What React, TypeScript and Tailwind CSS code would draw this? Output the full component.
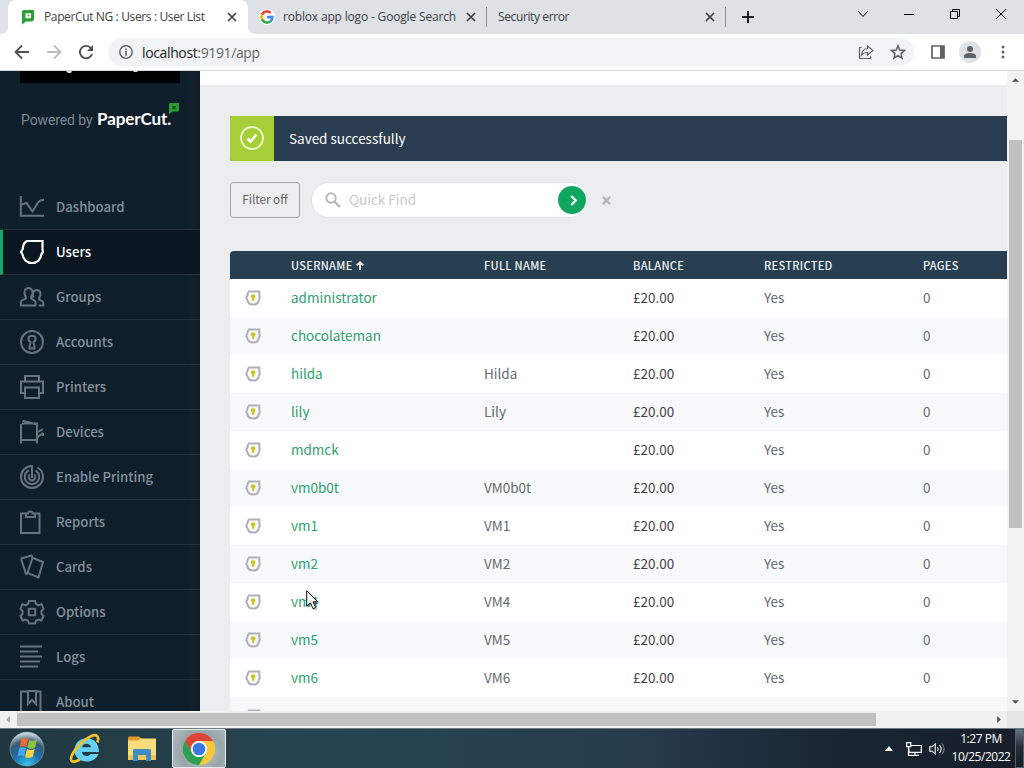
import React from "react";

const Svg = ({ className, children, vb = "0 0 24 24" }: { className?: string; children: React.ReactNode; vb?: string }) => (
  <svg viewBox={vb} className={className} fill="none" stroke="currentColor">
    {children}
  </svg>
);

const navIcons: Record<string, React.ReactNode> = {
  Dashboard: <path d="M.8 1v19.800H24M.8 9.800 6.500 8l6 8.500L18 7.500c1.200-1.800 3-2.500 6-2.700" />,
  Users: <path strokeWidth="2.200" d="M7 1h15.500v8.500L23 12l-1.600 2.200C20.800 19.500 17 23 12 23S3.200 19.500 2.400 14.200L1 12l1.800-3C3 5 4.500 2.200 7 1Z" />,
  Groups: (
    <path d="M.8 20.500v-3.800c0-1.500 3.500-1.700 5-3.200v-2C4 10 3.500 3 8.500 3s4.500 7 2.700 8.500v2c2 1.500 4.300 2 4.300 3.500v3.500ZM13.500 12.500c-1.500-3-.5-7.500 3.300-7.500 4.500 0 4.200 5.500 2.500 7.500v2.200c2 1 4 1.300 4 2.800v3h-4.500" />
  ),
  Accounts: (
    <>
      <circle cx="12" cy="12" r="11" />
      <path d="M9.500 18.500v-2l1-4.500C7 10 8 5.800 12 5.800s5 4.200 1.500 6.200l1 4.500v2Z" />
    </>
  ),
  Printers: <path d="M5 6V1h14v5M4 18H1V6.500h22V18h-3M5 12.500h14V23H5Z" />,
  Devices: <path d="M2 3.500h15v16.500M1 4v19.500M1 20h16v3.500M2.500.8 17 4.500M18 12l5-3M17 17.500l6-4.500M23 13v3" />,
  "Enable Printing": (
    <path d="M12 13V1C5.500 1 1 6 1 12s5 11 11 11 11-5 11-11c0-4-2-7.500-5.500-9.500M9 5.500C6 6.500 4.800 9 4.800 12c0 4 3.200 7.200 7.200 7.200s7.200-3.200 7.200-7.200c0-2.700-1.300-5-3.700-6.300M9.500 9.500c-2 2.500-.5 6 2.500 6s4.500-3.500 2.500-6" />
  ),
  Reports: <path d="M5.500 3.500H1V23h18.500V3.500h-5M6 7h9V3.500h-2.500C12.500.8 8 .8 8 3.500H6Z" />,
  Cards: <path d="m1 3.500 10.500-3 1 2.300M1 3.500l5 15.500 3-1M12.500 2.800 23 7l-4.500 15.500L7.500 18Z" />,
  Options: (
    <>
      <path d="M9 1h6l1 3 2.500 1.300L21.500 4l2 5-2 2v3l2 2-2 4.500-3-1-2.500 1.300-1 2.700H9l-1-2.700L5.500 19.500l-3 1L.5 16l2-2v-3l-2-2 2-5 3 1.300L8 4Z" />
      <path d="M8.800 8.800h6.400v6.400H8.800Z" />
    </>
  ),
  Logs: <path d="M0 1.500h22M0 6.500h18M0 11.500h22M0 16.500h20M0 21.500h18" />,
  About: <path d="M7.500 1.500H1V24M16 1.500h4.500V24M8 1h8v13l-4-4-4 4Z" />,
};

const nav = Object.keys(navIcons);

const users: [string, string][] = [
  ["administrator", ""],
  ["chocolateman", ""],
  ["hilda", "Hilda"],
  ["lily", "Lily"],
  ["mdmck", ""],
  ["vm0b0t", "VM0b0t"],
  ["vm1", "VM1"],
  ["vm2", "VM2"],
  ["vm4", "VM4"],
  ["vm5", "VM5"],
  ["vm6", "VM6"],
];

const Close = ({ className = "" }: { className?: string }) => (
  <Svg vb="0 0 10 10" className={"h-[10px] w-[10px] text-[#3c4043] " + className}>
    <path strokeWidth="1.700" d="m1 1 8 8M9 1 1 9" />
  </Svg>
);

const UserBadge = () => (
  <Svg vb="0 0 16 16" className="mt-[2px] ml-[15px] h-4 w-4 shrink-0 text-[#b0b1b8]">
    <path strokeWidth="2" d="M4 1.500h10.300v5l.6 1.500-.9 1.500c-.5 3.100-2.800 5.100-5.900 5.100S2.700 12.600 2.200 9.500L1.100 7.800l1.100-1.600c.2-2.500.8-3.800 1.800-4.700Z" />
    <path fill="#cfc225" stroke="none" d="M8.200 4.300c2.800 0 3 2.900 1.200 4v2l-1.200 1.200L7 10.300v-2c-1.800-1.100-1.600-4 1.200-4Z" />
  </Svg>
);

const cols = "grid grid-cols-[61px_193px_149px_131px_159px_84px] items-center";

function TabStrip() {
  return (
    <div className="flex h-[34px] shrink-0 bg-[#dee1e6] text-[12px] text-[#3c4043]">
      <div className="relative ml-2 flex w-[240px] items-center rounded-t-lg bg-white">
        <span className="absolute bottom-0 -left-2 h-2 w-2 bg-[radial-gradient(circle_at_0_0,#dee1e6_8px,white_8px)]" />
        <span className="absolute -right-2 bottom-0 h-2 w-2 bg-[radial-gradient(circle_at_100%_0,#dee1e6_8px,white_8px)]" />
        <svg viewBox="0 0 14 16" className="ml-[13px] h-4 w-[14px]">
          <path fill="#2f9e36" d="M3 1h10v8.500c0 2-1 3-3 3H5l-4 3V4c0-2 0-3 2-3Z" />
          <path fill="#fff" d="M4.500 4.300h5.500v5H4.500Z" />
          <path fill="#2f9e36" d="M6.500 5.800h1.600v1.600H6.500z" />
        </svg>
        <span className="ml-[9px] w-[183px] whitespace-nowrap tracking-[-0.370px]">PaperCut NG : Users : User List</span>
        <Close />
      </div>
      <div className="flex w-[239px] items-center">
        <svg viewBox="0 0 48 48" className="ml-[11px] h-4 w-4 rounded-full bg-white p-px">
          <path fill="#EA4335" d="M24 9.500c3.500 0 6.700 1.200 9.200 3.600l6.900-6.900C35.900 2.400 30.500 0 24 0 14.600 0 6.500 5.400 2.600 13.200l8 6.200C12.400 13.700 17.700 9.500 24 9.500z" />
          <path fill="#4285F4" d="M47 24.600c0-1.600-.2-3.100-.4-4.600H24v9h12.900c-.6 3-2.200 5.500-4.700 7.200l7.700 6c4.500-4.200 7.100-10.400 7.100-17.600z" />
          <path fill="#FBBC05" d="M10.500 28.600A14 14 0 0 1 10.500 19.400l-8-6.200a24 24 0 0 0 0 21.600z" />
          <path fill="#34A853" d="M24 48c6.500 0 11.900-2.100 15.900-5.800l-7.700-6c-2.200 1.500-4.900 2.300-8.200 2.300-6.300 0-11.600-4.200-13.500-9.900l-8 6.200C6.500 42.600 14.600 48 24 48z" />
        </svg>
        <span className="ml-[8px] w-[183px] whitespace-nowrap tracking-[-0.170px]">roblox app logo - Google Search</span>
        <Close />
        <span className="ml-[10px] h-5 w-px bg-[#8b8f94]" />
      </div>
      <div className="flex w-[239px] items-center">
        <span className="ml-[11px] w-[207px] whitespace-nowrap tracking-[-0.380px]">Security error</span>
        <Close />
        <span className="ml-[10px] h-5 w-px bg-[#8b8f94]" />
      </div>
      <Svg vb="0 0 12 12" className="mt-[11px] ml-[16px] h-3 w-3 text-[#202124]">
        <path strokeWidth="2" d="M6 0v12M0 6h12" />
      </Svg>
      <Svg vb="0 0 12 12" className="mt-[8px] ml-[103px] h-3 w-3 text-black">
        <path d="m1 3 5 5.500L11 3" />
      </Svg>
      <Svg vb="0 0 12 12" className="mt-[8px] ml-[34px] h-3 w-3 text-black">
        <path d="M1 6.500h10" />
      </Svg>
      <Svg vb="0 0 12 12" className="mt-[8px] ml-[34px] h-3 w-3 text-black">
        <path d="M1.500 3.500h7v7h-7ZM3.500 3.500v-2h7v7h-2" />
      </Svg>
      <Svg vb="0 0 12 12" className="mt-[8px] ml-[34px] h-3 w-3 text-black">
        <path d="m1 1 10 10M11 1 1 11" />
      </Svg>
    </div>
  );
}

function Toolbar() {
  return (
    <div className="flex h-[37px] shrink-0 items-center border-b border-[#d6d7da] bg-white text-[#5f6368]">
      <Svg vb="0 0 16 16" className="ml-[14px] h-4 w-4 text-[#4d5156]">
        <path strokeWidth="1.800" d="M15 8H2M8 1.500 1.500 8 8 14.500" />
      </Svg>
      <Svg vb="0 0 16 16" className="ml-[16px] h-4 w-4 text-[#babcbe]">
        <path strokeWidth="1.800" d="M1 8h13M8 1.500 14.500 8 8 14.500" />
      </Svg>
      <Svg vb="0 0 16 16" className="ml-[16px] h-4 w-4 text-[#4d5156]">
        <path strokeWidth="1.900" d="M14 10a6.200 6.200 0 1 1-1.600-6.400L14.500 5.700" />
        <path fill="currentColor" stroke="none" d="M15 1v6H9Z" />
      </Svg>
      <div className="ml-[14px] flex h-7 w-[806px] items-center rounded-full bg-[#f1f3f4]">
        <Svg vb="0 0 14 14" className="ml-[11px] h-[14px] w-[14px]">
          <circle cx="7" cy="7" r="6.200" strokeWidth="1.400" />
          <path strokeWidth="1.500" d="M7 3.200v1.600M7 6v4.800" />
        </Svg>
        <span className="ml-[9px] flex-1 text-[14px] tracking-[-0.370px]">
          <span className="text-[#202124]">localhost</span>:9191/app
        </span>
        <Svg vb="0 0 16 16" className="h-4 w-4">
          <path strokeWidth="1.200" d="M3.500 3.500H1.500v11h11V12M9.500 2l5.500 4.500L9.500 11V8.500c-3 0-4.500.5-6 2.500.5-4 2-6 6-6.500Z" />
        </Svg>
        <Svg vb="0 0 16 16" className="mr-[8px] ml-[16px] h-4 w-4">
          <path strokeWidth="1.500" d="m8 1.800 1.800 4.300 4.700.4L11 9.600l1 4.600-4-2.500-4 2.500 1-4.600-3.500-3.100 4.700-.4Z" />
        </Svg>
      </div>
      <Svg vb="0 0 14 14" className="ml-[17px] h-[14px] w-[14px]">
        <path strokeWidth="1.700" d="M1 1h12v12H1Z" />
        <path fill="currentColor" stroke="none" d="M9 1h4v12H9Z" />
      </Svg>
      <span className="ml-[14px] flex h-[22px] w-[22px] items-center justify-center rounded-full bg-[#dee1e6]">
        <svg viewBox="0 0 12 12" className="h-3 w-3" fill="#5f6368">
          <circle cx="6" cy="3" r="3" />
          <path d="M0 12V10c0-2 3-3 6-3s6 1 6 3v2Z" />
        </svg>
      </span>
      <svg viewBox="0 0 4 14" className="ml-[20px] h-[14px] w-1" fill="#5f6368">
        <circle cx="2" cy="2" r="1.500" />
        <circle cx="2" cy="7" r="1.500" />
        <circle cx="2" cy="12" r="1.500" />
      </svg>
    </div>
  );
}

function Sidebar() {
  return (
    <aside className="flex w-[200px] shrink-0 flex-col overflow-hidden bg-[linear-gradient(90deg,#0f1e2b_0%,#0f1e2b_94%,#12202a_96%,#101b24_100%)]">
      <div className="mx-5 h-3 shrink-0 bg-black">
        <svg viewBox="0 0 160 12" className="h-3 w-40" fill="#ddd">
          <path d="M46 0h6l-1 2h-3ZM113 0h5l-1 1h-3Z" />
        </svg>
      </div>
      <div className="mt-[22px] flex h-[30px] shrink-0 items-center pl-[21px] whitespace-nowrap">
        <span className="w-[76px] font-['Roboto',sans-serif] text-[14px] tracking-[-0.100px] text-[#7d8790]">Powered by</span>
        <span className="w-[72px] pb-[2px] font-['Lato',sans-serif] text-[17px] font-bold tracking-[-0.100px] text-white">PaperCut.</span>
        <svg viewBox="0 0 10 11" className="mb-[23px] h-[11px] w-[10px]">
          <path fill="#2b9a35" d="M1.500 0H10v7c0 1-1 1.500-2 1.500H4L0 11V2C0 .5.500 0 1.500 0Z" />
          <path fill="#12501e" d="M3.500 3h3v3h-3z" />
        </svg>
      </div>
      <nav className="mt-[50px] font-['Noto_Sans_CJK_SC',sans-serif]">
        {nav.map((n) => {
          const active = n === "Users";
          return (
            <div
              key={n}
              className={
                "flex h-[45px] items-center border-b border-[#25343f] text-[13.200px] font-medium " +
                (active ? "border-l-[3px] border-l-[#14a868] bg-[#0b1620] pl-[17px] text-white" : "pl-5 text-[#84919b]")
              }
            >
              <Svg className={"mr-3 h-6 w-6 shrink-0 overflow-visible stroke-2 " + (active ? "text-white" : "text-[#66747e]")}>
                {navIcons[n]}
              </Svg>
              <span className="leading-5 whitespace-nowrap">{n}</span>
            </div>
          );
        })}
      </nav>
    </aside>
  );
}

function Main() {
  return (
    <main className="flex w-[807px] shrink-0 flex-col overflow-hidden bg-[#ecedef] font-['Noto_Sans_CJK_SC',sans-serif]">
      <div className="h-[14px] shrink-0 bg-white" />
      <div className="mt-[31px] ml-[30px] flex h-[45px] shrink-0 items-center overflow-hidden rounded-l-[2px] bg-[#2a3d50] text-[13.500px] text-white">
        <div className="flex h-full w-11 items-center justify-center bg-[#a6ce39]">
          <Svg className="mb-px h-6 w-6 text-[#eef8cc]">
            <circle cx="12" cy="12" r="11" strokeWidth="1.800" />
            <path strokeWidth="2.600" stroke="#fff" d="m7.500 12.500 3 3 6-7" />
          </Svg>
        </div>
        <span className="ml-[15px] pb-[2px] leading-5">Saved successfully</span>
      </div>
      <div className="mt-[21px] ml-[30px] flex h-9 shrink-0 items-center">
        <button className="h-9 w-[70px] rounded-[3px] border border-[#a2a4a8] pb-[2px] text-[11.700px] leading-4 whitespace-nowrap text-[#606368]">Filter off</button>
        <div className="ml-[11px] flex h-9 w-[277px] items-center rounded-full border border-[#e2e3e5] bg-white">
          <Svg vb="0 0 16 16" className="ml-[13px] h-4 w-4 text-[#b4b5b6]">
            <circle cx="6" cy="6" r="4.700" strokeWidth="1.900" />
            <path strokeWidth="2.200" d="m9.500 9.500 5.500 5.500" />
          </Svg>
          <span className="ml-[8px] w-[209px] pb-[2px] text-[13.500px] leading-5 text-[#c7c8ca]">Quick Find</span>
          <span className="flex h-7 w-7 items-center justify-center rounded-full bg-[#0fa75d]">
            <Svg vb="0 0 8 12" className="mt-px ml-[3px] h-[11px] w-[8px] text-white">
              <path strokeWidth="2.400" d="m1 1 5 5-5 5" />
            </Svg>
          </span>
        </div>
        <Svg vb="0 0 10 10" className="mt-px ml-[14px] h-[9px] w-[9px] text-[#b6b7b9]">
          <path strokeWidth="2.500" d="m1 1 8 8M9 1 1 9" />
        </Svg>
      </div>
      <div className="mt-[33px] ml-[30px] shrink-0 text-[13.500px]">
        <div className={cols + " h-7 rounded-tl-[4px] bg-[#283f52] pb-px text-[11px] font-medium tracking-[0.310px] whitespace-nowrap text-[#f2f5f7]"}>
          <span />
          <span className="flex items-center leading-4">
            USERNAME
            <Svg vb="0 0 8 9" className="mt-px ml-[3px] h-[9px] w-2">
              <path strokeWidth="1.800" d="M4 9V1.500M.7 4.500 4 1.200l3.300 3.300" />
            </Svg>
          </span>
          <span className="leading-4">FULL NAME</span>
          <span className="leading-4">BALANCE</span>
          <span className="leading-4">RESTRICTED</span>
          <span className="leading-4">PAGES</span>
        </div>
        {users.map(([u, f], i) => (
          <div key={u} className={cols + " h-[38px] pb-[2px] leading-5 text-[#66696d] " + (i % 2 ? "bg-[#f7f9fa]" : "bg-white")}>
            <UserBadge />
            <span className="text-[#2f9f6d]">{u}</span>
            <span>{f}</span>
            <span className="text-[#414347]">£20.00</span>
            <span>Yes</span>
            <span>0</span>
          </div>
        ))}
        <div className={cols + " h-[38px] bg-[#f7f8f8]"}>
          <UserBadge />
        </div>
      </div>
    </main>
  );
}

function Taskbar() {
  return (
    <footer className="flex h-10 shrink-0 items-center overflow-hidden border-t border-[#6d7d85] bg-[linear-gradient(90deg,#20373f_0%,#274551_30%,#263c4d_62%,#192733_80%,#171e28_100%)]">
      <svg viewBox="0 0 36 36" className="ml-[9px] h-9 w-9">
        <defs>
          <radialGradient id="orb" cx="50%" cy="95%" r="90%">
            <stop offset="0" stopColor="#35c4f0" />
            <stop offset=".45" stopColor="#1d6ca8" />
            <stop offset=".75" stopColor="#3a5a70" />
            <stop offset="1" stopColor="#c5d3da" />
          </radialGradient>
        </defs>
        <circle cx="18" cy="18" r="17" fill="url(#orb)" stroke="#8ba4b0" strokeWidth=".6" />
        <path fill="#ee6a35" d="M12.500 8c2-1.500 4.500-1 6.500.2l-1.700 8c-2-1.200-4.500-1.300-6.500-.3Z" />
        <path fill="#8ac63f" d="M20 9c2 1.200 5.300 1.200 8-.3l-2 8c-2.500 1.300-5.700 1.200-7.600 0Z" />
        <path fill="#4ba8e8" d="M10.400 17c2-1 4.500-.9 6.500.3l-1.800 8c-2-1.300-4.500-1.300-6.700-.3Z" />
        <path fill="#fcd23c" d="M18 18c2 1.200 5 1.200 7.700 0l-2 8c-2.200 1-5.500 1.200-7.600-.1Z" />
      </svg>
      <svg viewBox="0 0 32 32" className="ml-[24px] h-8 w-8">
        <path fill="#66d0f5" d="M30 19H13c.2 4.500 6.500 5.500 8.500 2H29.500C25 32.500 5.500 30.500 5.500 17.500 5.500 1.500 30 .5 30 19ZM13 14.200h9c-.5-4.500-8-5-9 0Z" />
        <path fill="none" stroke="#f2c42c" strokeWidth="2.600" d="M28.300 9.500C30.500 4 28-.5 20.500 4 13 8 5 17 2.600 23c-2.300 6.500 2 7 8.400 3.500" />
      </svg>
      <svg viewBox="0 0 30 26" className="ml-[26px] h-[26px] w-[30px]">
        <path fill="#e0992d" d="M1 2c0-1 .5-1.500 1.500-1.500H12L15 3v6H1Z" />
        <path fill="#f9dc7b" d="M1 4.500h10l3-2h15V24H1Z" />
        <path fill="#eec55b" d="M1 19h28v5H1Z" />
        <path fill="#3d8ec4" d="M6 25V14.500c0-1 .5-1.500 1.500-1.500h15c1 0 1.500.5 1.500 1.500V25h-5v-6h-8v6Z" />
      </svg>
      <div className="ml-[15px] flex h-[39px] w-[54px] items-center justify-center rounded-[2px] border border-[#e6ecec] bg-[radial-gradient(circle_at_55%_60%,#c9d0d1_0%,#98a4a8_55%,#b5bec1_100%)]">
        <svg viewBox="0 0 32 32" className="h-8 w-8">
          <path fill="#df4534" d="M2.100 8A16 16 0 0 1 29.900 8H16a8 8 0 0 0-6.900 12Z" />
          <path fill="#f9c73a" d="M29.900 8A16 16 0 0 1 16 32l6.900-12A8 8 0 0 0 16 8Z" />
          <path fill="#2c9f50" d="M2.100 8 9.100 20A8 8 0 0 0 22.900 20L16 32A16 16 0 0 1 2.100 8Z" />
          <circle cx="16" cy="16" r="8" fill="#fff" />
          <circle cx="16" cy="16" r="6.300" fill="#3b78e0" />
        </svg>
      </div>
      <div className="ml-auto flex h-full items-center text-white">
        <svg viewBox="0 0 8 5" className="h-[5px] w-2" fill="#fff">
          <path d="M0 5 4 0l4 5Z" />
        </svg>
        <Svg vb="0 0 16 14" className="ml-[13px] h-[14px] w-4">
          <path strokeWidth="1.200" d="M5 3.500h10.300v6.800H3V6.500M9 10v3M6 13.300h7M.7.700h4v4h-4ZM2.500 5v8.300H6" />
        </Svg>
        <Svg vb="0 0 16 14" className="ml-[7px] h-[14px] w-4">
          <path strokeWidth="1.100" d="M.8 4.800H3L6.200 2v10L3 9.200H.8ZM8.500 5c1 1.300 1 2.700 0 4M10.500 3c2.200 2.500 2.200 5.500 0 8" />
          <path strokeOpacity=".5" d="M12.800 1.500c3 3.500 3 7.500 0 11" />
        </Svg>
        <div className="ml-[6px] w-[60px] pb-[2px] text-center text-[12px] leading-[18px] tracking-[-0.480px] whitespace-nowrap">
          <div>1:27 PM</div>
          <div>10/25/2022</div>
        </div>
        <div className="ml-[4px] h-full w-[9px] border border-[#56606b] bg-[linear-gradient(180deg,#66717b,#252d36_45%,#161d25)]" />
      </div>
    </footer>
  );
}

export default function App() {
  return (
    <div className="relative flex h-[768px] w-[1024px] flex-col overflow-hidden bg-white font-['Open_Sans','Noto_Sans',sans-serif]">
      <TabStrip />
      <Toolbar />
      <div className="flex h-[640px] shrink-0">
        <Sidebar />
        <Main />
        <div className="flex w-[17px] flex-col items-center bg-[#f2f2f3]">
          <svg viewBox="0 0 8 4" className="mt-[7px] h-1 w-[7px]" fill="#505050">
            <path d="M0 4 4 0l4 4Z" />
          </svg>
          <div className="mt-[58px] h-[388px] w-[13px] bg-[#c1c1c1]" />
          <svg viewBox="0 0 8 4" className="mt-auto mb-[7px] h-1 w-[7px]" fill="#505050">
            <path d="M0 0h8L4 4Z" />
          </svg>
        </div>
      </div>
      <div className="flex h-[17px] shrink-0 items-center bg-[#f1f1f1]">
        <svg viewBox="0 0 4 8" className="ml-[6px] h-[7px] w-1" fill="#a3a3a3">
          <path d="M4 0v8L0 4Z" />
        </svg>
        <div className="ml-[7px] h-[13px] w-[859px] bg-[#c1c1c1]" />
        <svg viewBox="0 0 4 8" className="ml-[121px] h-[7px] w-1" fill="#505050">
          <path d="M0 0v8l4-4Z" />
        </svg>
        <div className="ml-auto h-full w-[17px] bg-[#e3e4e4]" />
      </div>
      <Taskbar />
      <svg viewBox="0 0 14 21" className="absolute top-[590px] left-[306px] h-[21px] w-[14px] drop-shadow-[1px_1px_1px_rgba(0,0,0,0.4)]">
        <path fill="#fff" stroke="#101010" d="M.7.800v15.400l3.700-3.400 2.700 5.900 2.500-1.100L7 11.800h4.800Z" />
      </svg>
    </div>
  );
}
